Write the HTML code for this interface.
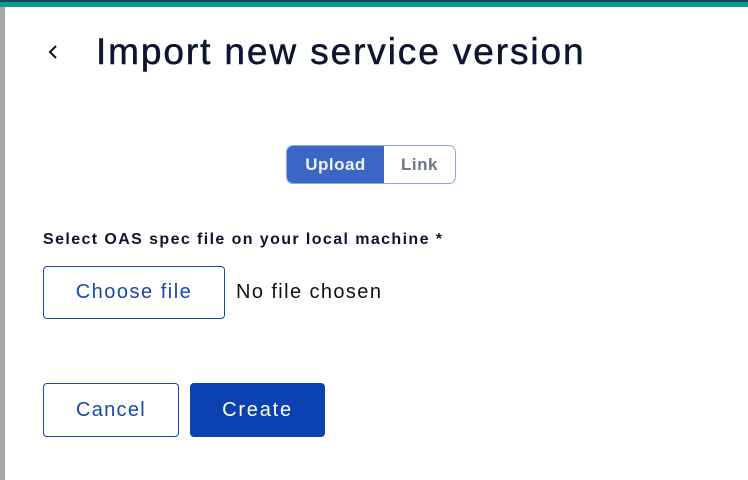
<!DOCTYPE html>
<html><head><meta charset="utf-8"><style>
*{box-sizing:border-box;margin:0;padding:0}
body{width:748px;height:480px;background:#fff;font-family:"Liberation Sans","DejaVu Sans",sans-serif;position:relative;overflow:hidden;color:#0d1530}
.top{position:absolute;left:0;top:0;width:748px;height:7px;background:#0f9a96;border-top:2px solid #0b4e5a}
.left{position:absolute;left:0;top:7px;width:5px;height:473px;background:#a8a8a8}
.back{position:absolute;left:46px;top:44px}
h1{position:absolute;left:96px;top:31px;font-size:37px;font-weight:normal;color:#0d1530;letter-spacing:1.9px;white-space:nowrap;-webkit-text-stroke:0.5px #0d1530}
.seg{position:absolute;left:286px;top:145px;width:170px;height:39px;border:1px solid #8fa8e0;border-radius:7px;overflow:hidden;display:flex}
.seg div{display:flex;align-items:center;justify-content:center;font-weight:bold;font-size:17px;letter-spacing:0.5px}
.up{width:97px;background:#3a67c6;color:#eef2fb}
.ln{flex:1;color:#6e7685}
.lbl{position:absolute;left:43px;top:231px;font-size:16px;font-weight:bold;color:#0d1530;letter-spacing:1.4px;white-space:nowrap}
.btn{position:absolute;border-radius:4px;display:flex;align-items:center;justify-content:center;font-size:20px}
.cf{left:43px;top:266px;width:182px;height:53px;border:1px solid #1a47b0;color:#1a47b0;letter-spacing:1.5px}
.nf{position:absolute;left:236px;top:281px;font-size:20px;color:#111;letter-spacing:1.4px;white-space:nowrap}
.cancel{left:43px;top:383px;width:136px;height:54px;border:1px solid #1a47b0;color:#1a47b0;letter-spacing:1.3px}
.create{left:190px;top:383px;width:135px;height:54px;background:#0b41b0;color:#fff;letter-spacing:1.8px}
</style></head><body>
<div class="top"></div><div class="left"></div>
<svg class="back" width="14" height="16" viewBox="0 0 14 16"><path d="M10 2 L4 8 L10 14" fill="none" stroke="#111" stroke-width="2"/></svg>
<h1>Import new service version</h1>
<div class="seg"><div class="up">Upload</div><div class="ln">Link</div></div>
<div class="lbl">Select OAS spec file on your local machine *</div>
<div class="btn cf">Choose file</div>
<div class="nf">No file chosen</div>
<div class="btn cancel">Cancel</div>
<div class="btn create">Create</div>
</body></html>
